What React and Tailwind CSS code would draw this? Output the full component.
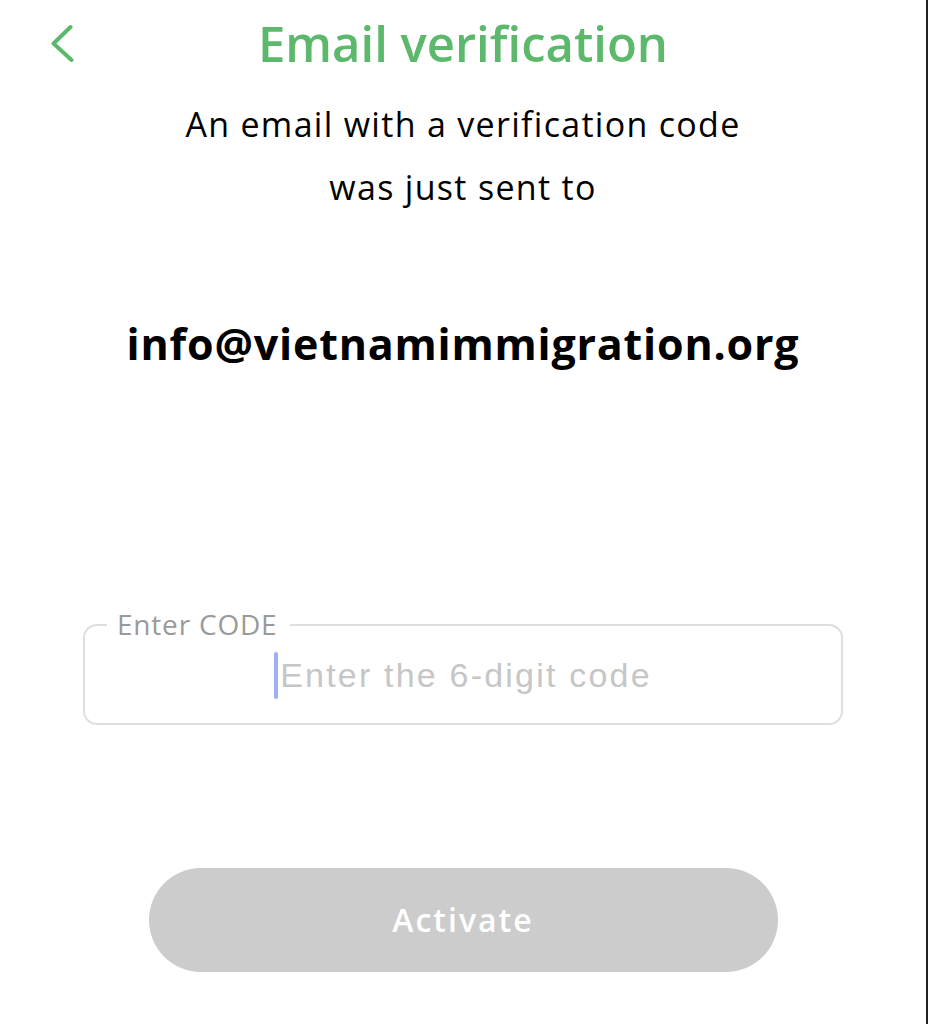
import React from "react";

const sans = { fontFamily: '"Open Sans", "Liberation Sans", sans-serif' };

export default function App() {
  return (
    <div
      className="flex min-h-[1024px] w-[928px] flex-col items-center border-r-[2px] border-[#222] bg-white"
      style={sans}
    >
      <div className="relative flex w-full justify-center pt-[11px]">
        <button className="absolute left-[48px] top-[22px] p-0">
          <svg width="30" height="40" viewBox="0 0 30 40" fill="none">
            <path
              d="M22.5 5 L5.5 21.5 L23.5 38"
              stroke="#5cb96b"
              strokeWidth="4"
              strokeLinecap="round"
              strokeLinejoin="round"
            />
          </svg>
        </button>
        <h1 className="text-[49px] font-semibold leading-[65px] text-[#5cb96b]">
          Email verification
        </h1>
      </div>

      <p className="mt-[17px] text-center text-[34px] leading-[63px] tracking-[1.3px] text-black">
        An email with a verification code
        <br />
        was just sent to
      </p>

      <div className="mt-[96px] text-[43px] font-bold leading-[57px] tracking-[0.8px] text-black">
        info@vietnamimmigration.org
      </div>

      <div className="relative mt-[252px] h-[101px] w-[760px] rounded-[14px] border-2 border-[#dedede]">
        <span className="absolute -top-[22px] left-[22px] bg-white pl-[10px] pr-[13px] text-[28px] leading-[40px] tracking-[0.8px] text-[#9a9a9a]">
          Enter CODE
        </span>
        <div className="flex h-full items-center justify-center pt-[2px]">
          <span className="mr-[2px] h-[47px] w-[4px] rounded-full bg-[#9fb0f2]" />
          <span
            className="text-[34px] tracking-[2.2px] text-[#c6c6c6]"
            style={{ fontFamily: '"Liberation Sans", Arial, sans-serif' }}
          >
            Enter the 6-digit code
          </span>
        </div>
      </div>

      <button className="mt-[143px] flex h-[104px] w-[629px] items-center justify-center rounded-full bg-[#cccccc] text-[32px] font-semibold tracking-[2px] text-white">
        Activate
      </button>
    </div>
  );
}
